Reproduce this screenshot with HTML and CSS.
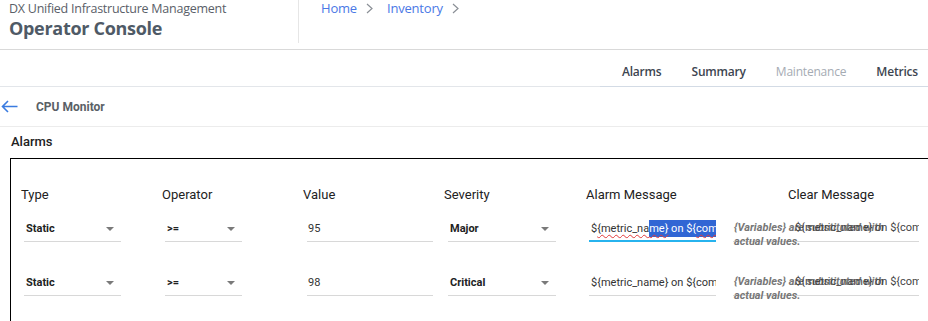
FILE: index.html
```html
<!DOCTYPE html>
<html>
<head>
<meta charset="utf-8">
<link rel="stylesheet" href="styles.css">
</head>
<body>
<header class="topbar">
  <div class="brand">
    <div class="brand-sub">DX Unified Infrastructure Management</div>
    <div class="brand-title">Operator Console</div>
  </div>
  <nav class="crumbs">
    <a class="crumb">Home</a>
    <svg class="chev" width="7" height="11" viewBox="0 0 7 11"><path d="M1 1 L6 5.5 L1 10" fill="none" stroke="#8a8f96" stroke-width="1.2"/></svg>
    <a class="crumb">Inventory</a>
    <svg class="chev" width="7" height="11" viewBox="0 0 7 11"><path d="M1 1 L6 5.5 L1 10" fill="none" stroke="#8a8f96" stroke-width="1.2"/></svg>
  </nav>
</header>
<div class="tabbar">
  <div class="tabs">
    <span class="tab">Alarms</span>
    <span class="tab">Summary</span>
    <span class="tab muted">Maintenance</span>
    <span class="tab">Metrics</span>
  </div>
</div>
<div class="titlebar">
  <svg class="back" width="17" height="13" viewBox="0 0 17 13"><path d="M16.5 6.5 H1.5 M7 1 L1.5 6.5 L7 12" fill="none" stroke="#3a7be0" stroke-width="1.6"/></svg>
  <span class="title">CPU Monitor</span>
</div>
<div class="section-title">Alarms</div>
<div class="box">
  <div class="row head">
    <div class="cell">Type</div>
    <div class="cell">Operator</div>
    <div class="cell">Value</div>
    <div class="cell">Severity</div>
    <div class="cell">Alarm Message</div>
    <div class="cell center">Clear Message</div>
  </div>
  <div class="row fields first">
    <div class="cell"><div class="field sel w-type"><span>Static</span><i class="caret"></i></div></div>
    <div class="cell"><div class="field sel w-op"><span>&gt;=</span><i class="caret"></i></div></div>
    <div class="cell"><div class="field inp w-val"><span>95</span></div></div>
    <div class="cell"><div class="field sel w-sev"><span>Major</span><i class="caret"></i></div></div>
    <div class="cell"><div class="field inp w-msg focus"><span class="msg">$<span class="sp">{metric_na</span><mark class="sel-hl"><span class="sp">me}</span> on ${<span class="sp">com</span></mark></span></div></div>
    <div class="cell"><div class="field inp w-clr"><span class="hint">{Variables} are substituted with actual values.</span><span class="msg clr">${metric_name} on ${com</span></div></div>
  </div>
  <div class="row fields">
    <div class="cell"><div class="field sel w-type"><span>Static</span><i class="caret"></i></div></div>
    <div class="cell"><div class="field sel w-op"><span>&gt;=</span><i class="caret"></i></div></div>
    <div class="cell"><div class="field inp w-val"><span>98</span></div></div>
    <div class="cell"><div class="field sel w-sev"><span>Critical</span><i class="caret"></i></div></div>
    <div class="cell"><div class="field inp w-msg"><span class="msg">${metric_name} on ${com</span></div></div>
    <div class="cell"><div class="field inp w-clr"><span class="hint">{Variables} are substituted with actual values.</span><span class="msg clr">${metric_name} on ${com</span></div></div>
  </div>
</div>
</body>
</html>
```
FILE: styles.css
```css
* { box-sizing: border-box; }
html, body { margin: 0; padding: 0; background: #fff; overflow: hidden; }
body { font-family: Roboto, "Liberation Sans", sans-serif; color: #222; width: 928px; height: 321px; }

.topbar { display: flex; height: 50px; border-bottom: 1px solid #d9d9d9; }
.brand { width: 299px; height: 43px; border-right: 1px solid #e6e6e6; padding-left: 9px; }
.brand-sub { font-family: "Open Sans", sans-serif; font-size: 12.5px; line-height: 17px; color: #5a6068; letter-spacing: -0.25px; }
.brand-title { font-family: "Open Sans", sans-serif; font-weight: 700; font-size: 18px; line-height: 22px; color: #4f5a66; letter-spacing: -0.3px; }
.crumbs { display: flex; align-items: center; height: 16px; padding-left: 22px; }
.crumb { font-family: "Open Sans", sans-serif; font-size: 13px; line-height: 16px; color: #4a78e6; letter-spacing: -0.2px; }
.chev { margin: 1px 14px 0 9px; }

.tabbar { display: flex; justify-content: flex-end; height: 37px; border-bottom: 1px solid #e3e6ea; }
.tabs { display: flex; align-items: center; border-bottom: 1px solid #d3dbe5; margin-bottom: -1px; padding: 6px 10px 0 22px; gap: 30px; }
.tab { font-family: "Open Sans", sans-serif; font-weight: 600; font-size: 12px; color: #3d4550; letter-spacing: -0.2px; }
.tab.muted { color: #a5abb3; font-weight: 400; }

.titlebar { display: flex; align-items: center; height: 40px; border-bottom: 1px solid #ececec; padding-left: 1px; }
.back { margin-right: 18px; }
.title { font-weight: 700; font-size: 12px; color: #5a5f66; }

.section-title { font-weight: 500; font-size: 13px; color: #222; padding-left: 11px; height: 31px; line-height: 30px; }

.box { margin-left: 10px; border: 1px solid #000; border-right: none; border-bottom: none; height: 200px; padding: 28px 0 0 10px; }
.row { display: grid; grid-template-columns: 141px 141px 141px 142px 143px 220px; }
.row.head { height: 15px; font-size: 13px; line-height: 15px; color: #222; }
.cell.center { text-align: center; padding-right: 16px; }
.row.fields { margin-top: 29px; height: 25px; }
.row.fields.first { margin-top: 15px; }

.field { position: relative; height: 25px; margin-left: 3px; border-bottom: 1px solid #d8d8d8; display: flex; align-items: center; font-size: 11px; color: #222; padding: 0 2px 1px 2px; }
.sel span { font-weight: 700; }
.caret { position: absolute; right: 7px; top: 10px; width: 0; height: 0; border-left: 4px solid transparent; border-right: 4px solid transparent; border-top: 4px solid #7a7a7a; }
.w-type { width: 97px; }
.w-op { width: 77px; }
.w-val { width: 126px; margin-left: 4px; color: #333; padding-left: 1px; }
.w-sev { width: 108px; margin-left: 4px; }
.w-msg { width: 127px; overflow: hidden; white-space: nowrap; padding-left: 2px; }
.w-msg.focus { border-bottom: 2px solid #27b3ee; }
.w-clr { width: 186px; margin-left: 4px; white-space: nowrap; }
.msg { font-size: 11px; color: #333; white-space: nowrap; }
.sp { text-decoration: underline wavy #e23a3a; text-decoration-thickness: 1px; text-underline-offset: 2px; }
.sel-hl { background: #3166d4; color: #fff; padding: 2px 0; }
.hint { position: absolute; left: 1px; top: 4px; width: 168px; white-space: normal; font-style: italic; font-weight: 700; font-size: 11px; line-height: 14px; color: #777; }
.clr { position: absolute; left: 62px; top: 4px; width: 124px; overflow: hidden; line-height: 14px; color: #444; }
```
